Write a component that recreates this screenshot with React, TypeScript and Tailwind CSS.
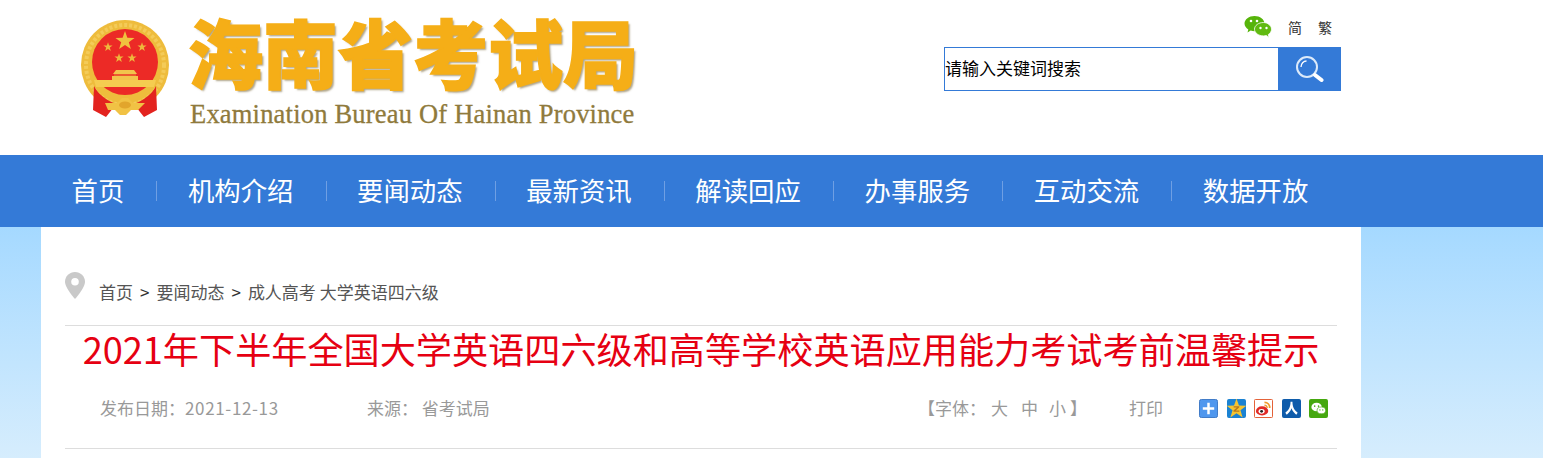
const cjk = { fontFamily: '"Noto Sans CJK SC", "Noto Sans", sans-serif' };

const navItems = ["首页", "机构介绍", "要闻动态", "最新资讯", "解读回应", "办事服务", "互动交流", "数据开放"];

function Star({ cx, cy, r, fill = "#f6c63c" }: { cx: number; cy: number; r: number; fill?: string }) {
  const pts = Array.from({ length: 10 }, (_, i) => {
    const rad = i % 2 === 0 ? r : r * 0.4;
    const a = (Math.PI / 5) * i - Math.PI / 2;
    return `${cx + rad * Math.cos(a)},${cy + rad * Math.sin(a)}`;
  }).join(" ");
  return <polygon points={pts} fill={fill} />;
}

function Emblem() {
  return (
    <svg width="92" height="100" viewBox="0 0 92 100" className="shrink-0">
      <ellipse cx="45" cy="45" rx="44" ry="45" fill="#eebc3c" />
      <ellipse cx="45" cy="45" rx="39" ry="40" fill="none" stroke="#f4cb58" strokeWidth="4" strokeDasharray="3 2" />
      <ellipse cx="45" cy="42" rx="33" ry="33" fill="#ec2a26" />
      <Star cx={45} cy={21} r={10} fill="#f0c23f" />
      <Star cx={28} cy={27} r={4.8} fill="#eeb73c" />
      <Star cx={62} cy={27} r={4.8} fill="#eeb73c" />
      <Star cx={39} cy={38} r={4.8} fill="#eeb73c" />
      <Star cx={52} cy={38} r={4.8} fill="#eeb73c" />
      <path d="M36 50h18l3 4H33z" fill="#f2c44c" />
      <path d="M34 54h22v2H34z" fill="#ec5a30" />
      <path d="M32 56h26v4H32z" fill="#f2c44c" />
      <path d="M14 60h62l-2 7H16z" fill="#f5cc50" />
      <path d="M14 66c4 8 12 14 22 18l-6 8-4 5-13-7z" fill="#e3231f" />
      <path d="M76 66c-4 8-12 14-22 18l6 8 4 5 13-7z" fill="#e3231f" />
      <path d="M25 83h12l5-5h6l5 5h12l-7 7h-7l-5 5h-6l-5-5h-7z" fill="#f1c244" />
      <ellipse cx="45" cy="85" rx="6" ry="3.500" fill="#e2a52c" />
    </svg>
  );
}

function WechatIcon() {
  return (
    <svg width="29" height="22" viewBox="0 0 28 22">
      <path d="M10 0C4.500 0 0 3.400 0 7.600c0 2.400 1.500 4.500 3.800 5.900L3 16.400l3.200-1.800c1.200.4 2.500.6 3.800.6 5.500 0 10-3.400 10-7.600S15.500 0 10 0z" fill="#56b40a" />
      <path d="M19 6.500c-5 0-9 3-9 6.700s4 6.700 9 6.700c1 0 1.900-.1 2.800-.4l2.700 1.900-.7-2.900c2-1.200 3.200-3.100 3.200-5.300 0-3.700-4-6.700-8-6.700z" fill="#60ba10" stroke="#fff" strokeWidth=".8" />
      <circle cx="6.500" cy="5" r="1.300" fill="#fff" />
      <circle cx="12.500" cy="5" r="1.300" fill="#fff" />
      <circle cx="16" cy="12" r="1.200" fill="#fff" />
      <circle cx="22" cy="12" r="1.200" fill="#fff" />
    </svg>
  );
}

function SearchIcon() {
  return (
    <svg width="28" height="26" viewBox="0 0 28 26">
      <circle cx="11" cy="11" r="10" fill="none" stroke="#dceafa" strokeWidth="2" />
      <path d="M5 11c0-3.500 2.500-6 5.500-6" fill="none" stroke="#fff" strokeWidth="1.300" />
      <path d="M19 19l6.500 5" stroke="#fff" strokeWidth="4" strokeLinecap="round" />
    </svg>
  );
}

function PinIcon() {
  return (
    <svg width="20" height="27" viewBox="0 0 20 27">
      <path d="M10 0C4.500 0 0 4.300 0 9.800 0 16 10 27 10 27s10-11 10-17.200C20 4.300 15.500 0 10 0z" fill="#c9c9c9" />
      <circle cx="10" cy="9.800" r="3.800" fill="#fff" />
    </svg>
  );
}

function ShareIcons() {
  return (
    <div className="flex items-center gap-[8.5px]">
      <svg width="19" height="19" viewBox="0 0 20 20">
        <rect x=".5" y=".5" width="19" height="19" rx="2" fill="#4f97ee" stroke="#3a76c4" />
        <path d="M8.700 4h2.600v4.700H16v2.600h-4.700V16H8.700v-4.700H4V8.700h4.700z" fill="#fff" />
      </svg>
      <svg width="19" height="19" viewBox="0 0 20 20">
        <rect width="20" height="20" rx="2" fill="#1b82d2" />
        <Star cx={10} cy={10.5} r={11} fill="#f5c431" />
        <path d="M7 7.500h6v1.300L9.300 12H13v1.500H6.800v-1.300L10.500 9H7z" fill="#b9791a" />
      </svg>
      <svg width="19" height="19" viewBox="0 0 20 20">
        <rect x=".5" y=".5" width="19" height="19" rx="1" fill="#fff" stroke="#e2562a" />
        <ellipse cx="8.500" cy="12.500" rx="6.500" ry="4.800" fill="#e02a26" />
        <ellipse cx="8" cy="13" rx="3.200" ry="2.500" fill="#fff" />
        <circle cx="8" cy="13" r="1.500" fill="#222" />
        <path d="M11 3.500c3.500 0 5.800 2.600 5.500 6" fill="none" stroke="#f09a2a" strokeWidth="1.800" />
        <path d="M11 6.500c1.800 0 3 1.200 2.800 3" fill="none" stroke="#f09a2a" strokeWidth="1.500" />
      </svg>
      <svg width="19" height="19" viewBox="0 0 20 20">
        <rect width="20" height="20" rx="2" fill="#0f5cab" />
        <path d="M9 3h2c0 5 1.500 8.500 5.500 11.500l-1.500 2c-2.300-1.800-4-4-5-6.800-1 2.800-2.700 5-5 6.800l-1.500-2C7.500 11.500 9 8 9 3z" fill="#fff" />
      </svg>
      <svg width="19" height="19" viewBox="0 0 20 20">
        <rect width="20" height="20" rx="2" fill="#45a80f" />
        <ellipse cx="8" cy="8.500" rx="5.500" ry="4.500" fill="#fff" />
        <ellipse cx="13" cy="12" rx="4.500" ry="3.600" fill="#fff" stroke="#45a80f" strokeWidth=".7" />
        <circle cx="6" cy="7.500" r=".8" fill="#45a80f" />
        <circle cx="10" cy="7.500" r=".8" fill="#45a80f" />
        <circle cx="11.500" cy="11.500" r=".7" fill="#45a80f" />
        <circle cx="14.500" cy="11.500" r=".7" fill="#45a80f" />
      </svg>
    </div>
  );
}

export default function App() {
  return (
    <div className="h-[458px] overflow-hidden" style={cjk}>
      <header className="flex h-[155px] justify-between bg-white pl-[80px] pr-[202px]">
        <div className="flex pt-[20px]">
          <Emblem />
          <div className="-mt-[8px] ml-[16px] flex flex-col">
            <h1 className="h-[78px] whitespace-nowrap text-[75px] font-black leading-[78px] text-[#f5ae17] [-webkit-text-stroke:1.5px_#f5ae17] [text-shadow:2px_2px_2px_rgba(110,90,40,0.55)]">
              海南省考试局
            </h1>
            <p className="ml-[2px] mt-[7px] whitespace-nowrap font-['Liberation_Serif',serif] text-[26.5px] leading-[34px] tracking-[0.2px] text-[#8f7a3c] [-webkit-text-stroke:0.3px_#8f7a3c]">
              Examination Bureau Of Hainan Province
            </p>
          </div>
        </div>
        <div className="flex flex-col items-end pt-[16px]">
          <div className="flex h-[31px] items-start text-[14px] leading-[22px] text-[#333]">
            <WechatIcon />
            <span className="ml-[15px] mr-[16px]">简</span>
            <span className="mr-[9px]">繁</span>
          </div>
          <div className="flex h-[44px] w-[397px]">
            <div className="flex flex-1 items-center border border-[#347ad7] pb-[2px] text-[17px] text-black">
              请输入关键词搜索
            </div>
            <div className="flex w-[62px] items-center justify-center bg-[#347ad7]">
              <SearchIcon />
            </div>
          </div>
        </div>
      </header>

      <nav className="flex h-[72px] items-center bg-[#347ad7] pl-[41px] text-[26.4px] text-white">
        {navItems.map((item, i) => (
          <div key={item} className="flex items-center">
            <a className="block pb-[2px] pl-[30.5px] pr-[32.1px] leading-[70px]">{item}</a>
            {i < navItems.length - 1 && <span className="h-[20px] w-px bg-[#6f9fe3]" />}
          </div>
        ))}
      </nav>

      <div className="h-[231px] bg-gradient-to-b from-[#a5d9ff] to-[#d6edfd] px-[41px]">
        <main className="h-full w-[1320px] bg-white px-[24px]">
          <div className="flex h-[99px] items-start border-b border-[#ddd] pt-[45px]">
            <PinIcon />
            <div className="ml-[14px] mt-[8px] flex text-[17px] leading-[24px] text-[#555]">
              <span>首页</span>
              <span className="mx-[7px] text-[#333]">&gt;</span>
              <span>要闻动态</span>
              <span className="mx-[7px] text-[#333]">&gt;</span>
              <span>成人高考 大学英语四六级</span>
            </div>
          </div>
          <h2 className="whitespace-nowrap text-center text-[36.15px] font-normal leading-[44px] text-[#e60012]">
            2021年下半年全国大学英语四六级和高等学校英语应用能力考试考前温馨提示
          </h2>
          <div className="flex h-[79px] items-start justify-between border-b border-[#ddd] pl-[35px] pr-[9px] pt-[26px] text-[17px] leading-[24px] text-[#999]">
            <div className="flex">
              <span className="w-[267px]">
                发布日期：<span className="tracking-[0.65px]">2021-12-13</span>
              </span>
              <span>来源：&nbsp;省考试局</span>
            </div>
            <div className="flex items-center">
              <span>【字体：</span>
              <span className="ml-[5px]">大</span>
              <span className="ml-[13px]">中</span>
              <span className="ml-[11px]">小</span>
              <span className="ml-[4px]">】</span>
              <span className="ml-[42px] mr-[36px]">打印</span>
              <ShareIcons />
            </div>
          </div>
        </main>
      </div>
    </div>
  );
}
